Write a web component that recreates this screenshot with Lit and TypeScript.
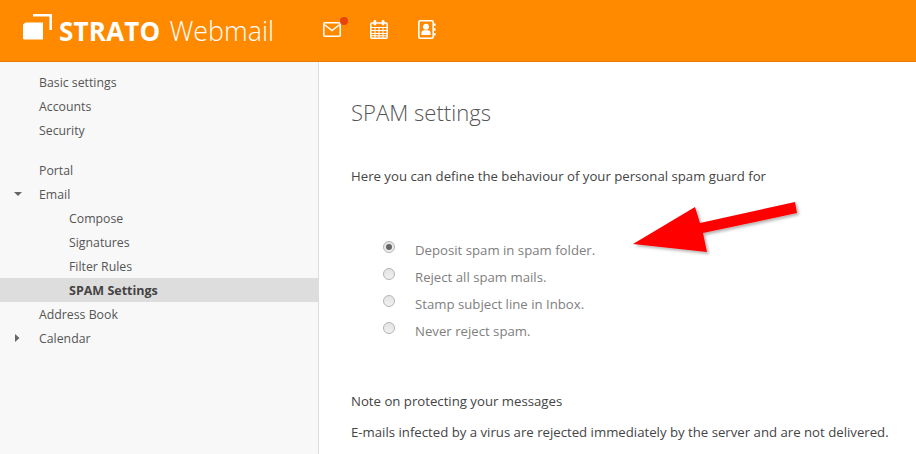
import { html, css, LitElement, nothing } from 'lit';
import { customElement } from 'lit/decorators.js';
import { classMap } from 'lit/directives/class-map.js';

type NavItem = {
  label: string;
  level?: number;
  arrow?: 'open' | 'closed';
  active?: boolean;
  gap?: boolean;
};

const NAV: NavItem[] = [
  { label: 'Basic settings' },
  { label: 'Accounts' },
  { label: 'Security' },
  { label: 'Portal', gap: true },
  { label: 'Email', arrow: 'open' },
  { label: 'Compose', level: 1 },
  { label: 'Signatures', level: 1 },
  { label: 'Filter Rules', level: 1 },
  { label: 'SPAM Settings', level: 1, active: true },
  { label: 'Address Book' },
  { label: 'Calendar', arrow: 'closed' },
];

const OPTIONS = [
  'Deposit spam in spam folder.',
  'Reject all spam mails.',
  'Stamp subject line in Inbox.',
  'Never reject spam.',
];

@customElement('app-root')
export class AppRoot extends LitElement {
  static styles = css`
    :host {
      display: block;
      width: 916px;
      height: 454px;
      overflow: hidden;
      position: relative;
      background: #fff;
      font-family: 'Open Sans', 'Liberation Sans', sans-serif;
      font-size: 13.2px;
      color: #555;
    }

    .top {
      height: 61px;
      background: #ff8a00;
      border-bottom: 1px solid #e57c06;
      display: flex;
      align-items: center;
      color: #fff;
    }

    .brand {
      display: flex;
      align-items: center;
      margin-left: 23px;
      width: 300px;
      height: 30px;
      flex: none;
    }

    .brand svg {
      margin-right: 7px;
      margin-top: -6px;
    }

    .brand b {
      font-size: 26px;
      font-weight: 700;
      letter-spacing: 0.2px;
      margin-right: 9px;
    }

    .brand span {
      font-size: 26.8px;
      font-weight: 300;
    }

    .icons {
      display: flex;
      align-items: center;
      gap: 29px;
      position: relative;
      margin-top: -3px;
    }

    .icons .book {
      margin-left: 1px;
    }

    .dot {
      position: absolute;
      left: 17px;
      top: -3px;
      width: 8px;
      height: 8px;
      border-radius: 50%;
      background: #e8440a;
    }

    .body {
      display: flex;
      height: 392px;
    }

    .side {
      width: 318px;
      flex: none;
      background: #f8f8f8;
      border-right: 1px solid #ddd;
      padding-top: 8px;
      font-size: 12.3px;
    }

    .row {
      height: 24px;
      line-height: 26px;
      padding-left: 39px;
      position: relative;
      color: #555;
    }

    .row.sub {
      padding-left: 69px;
    }

    .row.gap {
      margin-top: 16px;
    }

    .row.active {
      background: #ddd;
      font-weight: 700;
      font-size: 12.5px;
      color: #444;
    }

    .tri {
      position: absolute;
      left: 14px;
      top: 8px;
    }

    .main {
      flex: 1;
      padding-left: 32px;
    }

    h1 {
      margin: 34px 0 0;
      font-size: 22.1px;
      line-height: 32px;
      font-weight: 300;
      color: #555;
    }

    .intro {
      margin: 36px 0 0;
      line-height: 24px;
      color: #444;
    }

    .options {
      margin-top: 48px;
      display: flex;
      flex-direction: column;
      padding-left: 32px;
    }

    .opt {
      height: 27px;
      display: flex;
      align-items: center;
      color: #808080;
      white-space: nowrap;
    }

    .radio {
      width: 12px;
      height: 12px;
      flex: none;
      border-radius: 50%;
      border: 1px solid #b4b4b4;
      background: linear-gradient(#e4e4e4, #f0f0f0);
      box-sizing: border-box;
      margin-right: 20px;
      margin-top: -6px;
      display: flex;
      align-items: center;
      justify-content: center;
    }

    .radio.on::after {
      content: '';
      width: 6px;
      height: 6px;
      border-radius: 50%;
      background: #666;
    }

    .note {
      margin: 45px 0 0;
      line-height: 24px;
      color: #444;
      white-space: nowrap;
    }

    .note + .note {
      margin-top: 7px;
    }

    .arrow {
      position: absolute;
      left: 0;
      top: 0;
      pointer-events: none;
    }
  `;

  renderNav(item: NavItem) {
    const cls = {
      row: true,
      sub: !!item.level,
      gap: !!item.gap,
      active: !!item.active,
    };
    return html`<div class=${classMap(cls)}>
      ${item.arrow === 'open'
        ? html`<svg class="tri" width="8" height="8" viewBox="0 0 8 8">
            <path d="M0 2h8L4 6z" fill="#666" />
          </svg>`
        : nothing}
      ${item.arrow === 'closed'
        ? html`<svg class="tri" width="8" height="8" viewBox="0 0 8 8">
            <path d="M1 0l4.500 4L1 8z" fill="#666" />
          </svg>`
        : nothing}
      ${item.label}
    </div>`;
  }

  render() {
    return html`
      <div class="top">
        <div class="brand">
          <svg width="29" height="27" viewBox="0 0 29 27">
            <path d="M0 10.500L2.500 8.500H20V25.500H1.500Q0 25.500 0 24z" fill="#fff" />
            <path d="M10 1.300h17.700V16" fill="none" stroke="#fff" stroke-width="2.600" />
          </svg>
          <b>STRATO</b><span>Webmail</span>
        </div>
        <div class="icons">
          <span class="dot"></span>
          <svg width="18" height="15" viewBox="0 0 18 15" fill="none" stroke="#fff" stroke-width="1.500">
            <rect x="0.800" y="0.800" width="16.400" height="13.400" rx="1" />
            <path d="M1.200 2.500l7.800 6 7.800-6" />
          </svg>
          <svg width="18" height="19" viewBox="0 0 18 19" fill="none" stroke="#fff" stroke-width="1">
            <rect x="0.800" y="3" width="16.400" height="15.200" rx="1" stroke-width="1.500" />
            <path d="M1 7.500h16M1 10.500h16M1 13.500h16M1 15.800h16M5 7.500v10.500M9 7.500v10.500M13 7.500v10.500" />
            <rect x="3.500" y="0" width="2.800" height="5.500" rx="1.400" fill="#fff" stroke="none" />
            <rect x="11.700" y="0" width="2.800" height="5.500" rx="1.400" fill="#fff" stroke="none" />
          </svg>
          <svg class="book" width="18" height="19" viewBox="0 0 18 19">
            <rect x="0.800" y="0.800" width="14.400" height="17.400" rx="1.500" fill="none" stroke="#fff" stroke-width="1.600" />
            <circle cx="8" cy="6.800" r="3" fill="#fff" />
            <path d="M3.400 15v-1.800q0-3 3-3h3.200q3 0 3 3V15z" fill="#fff" />
            <path d="M16.800 3.500v2.500M16.800 8.200v2.500M16.800 13v2.500" stroke="#fff" stroke-width="1.500" />
          </svg>
        </div>
      </div>
      <div class="body">
        <nav class="side">${NAV.map((n) => this.renderNav(n))}</nav>
        <main class="main">
          <h1>SPAM settings</h1>
          <p class="intro">Here you can define the behaviour of your personal spam guard for</p>
          <div class="options">
            ${OPTIONS.map(
              (o, i) => html`<div class="opt">
                <span class=${classMap({ radio: true, on: i === 0 })}></span>${o}
              </div>`,
            )}
          </div>
          <p class="note">Note on protecting your messages</p>
          <p class="note">E-mails infected by a virus are rejected immediately by the server and are not delivered.</p>
        </main>
      </div>
      <svg class="arrow" width="916" height="454" viewBox="0 0 916 454">
        <defs>
          <filter id="sh" x="-10%" y="-20%" width="120%" height="150%">
            <feDropShadow dx="2" dy="2" stdDeviation="1.500" flood-color="#000" flood-opacity="0.3" />
          </filter>
        </defs>
        <path
          d="M633 244L695 207L700 223L795 202L797 213L703 233L707 252z"
          fill="#ff0000"
          filter="url(#sh)"
        />
      </svg>
    `;
  }
}
